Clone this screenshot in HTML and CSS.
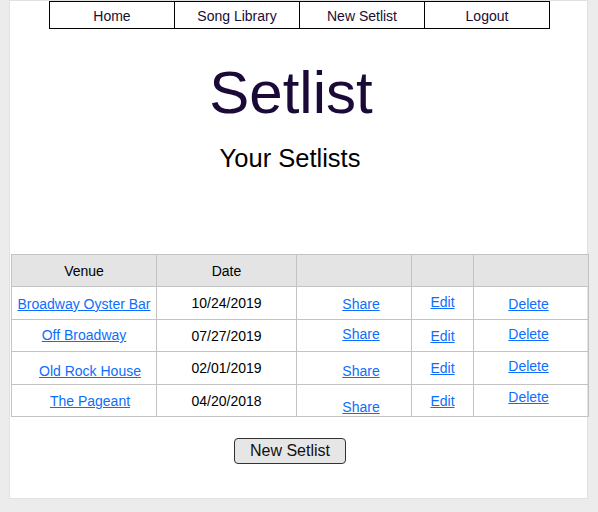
FILE: index.html
```html
<!DOCTYPE html>
<html lang="en">
<head>
<meta charset="utf-8">
<title>Setlist</title>
<link rel="stylesheet" href="styles.css">
</head>
<body>
<div class="page">
  <nav class="nav">
    <a class="nav-item" href="#">Home</a>
    <a class="nav-item" href="#">Song Library</a>
    <a class="nav-item" href="#">New Setlist</a>
    <a class="nav-item" href="#">Logout</a>
  </nav>
  <div class="hero">
    <h1 class="title">Setlist</h1>
    <h2 class="subtitle">Your Setlists</h2>
  </div>
  <table class="setlists">
    <colgroup>
      <col class="c-venue"><col class="c-date"><col class="c-share"><col class="c-edit"><col class="c-delete">
    </colgroup>
    <thead>
      <tr class="head-row"><th>Venue</th><th>Date</th><th></th><th></th><th></th></tr>
    </thead>
    <tbody>
      <tr class="r-tall">
        <td class="pt9"><a href="#">Broadway Oyster Bar</a></td>
        <td class="pt8">10/24/2019</td>
        <td class="share pt9"><a href="#">Share</a></td>
        <td class="pt7"><a href="#">Edit</a></td>
        <td class="delete pt9"><a href="#">Delete</a></td>
      </tr>
      <tr class="r-short">
        <td class="pt7"><a href="#">Off Broadway</a></td>
        <td class="pt8">07/27/2019</td>
        <td class="share pt6"><a href="#">Share</a></td>
        <td class="pt8"><a href="#">Edit</a></td>
        <td class="delete pt6"><a href="#">Delete</a></td>
      </tr>
      <tr class="r-tall">
        <td class="venue-shift pt11"><a href="#">Old Rock House</a></td>
        <td class="pt8">02/01/2019</td>
        <td class="share pt11"><a href="#">Share</a></td>
        <td class="pt8"><a href="#">Edit</a></td>
        <td class="delete pt6"><a href="#">Delete</a></td>
      </tr>
      <tr class="r-short">
        <td class="venue-shift pt8"><a href="#">The Pageant</a></td>
        <td class="pt8">04/20/2018</td>
        <td class="share pt14"><a href="#">Share</a></td>
        <td class="pt8"><a href="#">Edit</a></td>
        <td class="delete pt4"><a href="#">Delete</a></td>
      </tr>
    </tbody>
  </table>
  <div class="actions">
    <button class="btn" type="button">New Setlist</button>
  </div>
</div>
</body>
</html>
```

FILE: styles.css
```css
html, body {
  margin: 0;
  padding: 0;
}

body {
  background: #ececec;
  font-family: "Liberation Sans", Arial, sans-serif;
  color: #000;
}

.page {
  margin-left: 9px;
  width: 577px;
  height: 497px;
  background: #fff;
  border: 1px solid #e1e1e1;
}

.nav {
  display: flex;
  width: 499px;
  margin-left: 39px;
  border: 1px solid #000;
}

.nav-item {
  width: 124px;
  padding: 6px 0 4px;
  line-height: 16px;
  font-size: 14px;
  text-align: center;
  color: #1a0c33;
  text-decoration: none;
  border-right: 1px solid #000;
}

.nav-item:last-child {
  border-right: none;
}

.hero {
  width: 560px;
  text-align: center;
}

.title {
  margin: 29px 0 0 2px;
  font-size: 60px;
  line-height: 69px;
  font-weight: normal;
  color: #1b0a38;
}

.subtitle {
  margin: 17px 0 0;
  font-size: 25.5px;
  line-height: 29px;
  font-weight: normal;
  color: #000;
}

.setlists {
  margin: 81px 0 0 1px;
  width: 577px;
  table-layout: fixed;
  border-collapse: collapse;
  font-size: 14px;
  line-height: 16px;
}

.c-venue { width: 145px; }
.c-date { width: 140px; }
.c-share { width: 115px; }
.c-edit { width: 62px; }
.c-delete { width: 115px; }

.setlists th,
.setlists td {
  border: 1px solid #c3c3c3;
  padding: 0;
  text-align: center;
}

.setlists th {
  height: 31px;
  background: #e4e4e4;
  font-weight: normal;
  vertical-align: middle;
}

.setlists td {
  vertical-align: top;
}

.r-tall { height: 33px; }
.r-short { height: 32px; }

.setlists a {
  color: #0d6efd;
  text-decoration: underline;
}

.share { padding-left: 14px !important; }
.delete { padding-right: 5px !important; }
.venue-shift { padding-left: 12px !important; }

.pt4 { padding-top: 4px !important; }
.pt6 { padding-top: 6px !important; }
.pt7 { padding-top: 7px !important; }
.pt8 { padding-top: 8px !important; }
.pt9 { padding-top: 9px !important; }
.pt11 { padding-top: 11px !important; }
.pt14 { padding-top: 14px !important; }

.actions {
  width: 560px;
  margin-top: 21px;
  text-align: center;
}

.btn {
  font-family: "Liberation Sans", Arial, sans-serif;
  font-size: 16px;
  line-height: 18px;
  color: #111;
  background: #e6e6e6;
  border: 1px solid #333;
  border-radius: 4px;
  padding: 3px 15px;
  margin: 0;
}
```
